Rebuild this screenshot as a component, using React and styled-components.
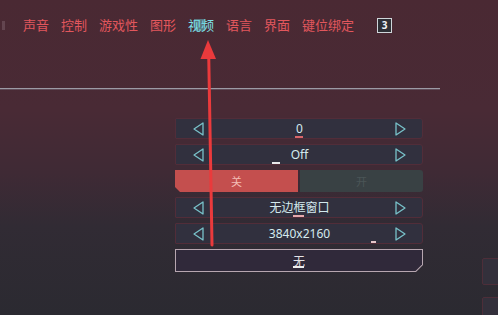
import React from "react";
import styled, { createGlobalStyle } from "styled-components";

const GlobalStyle = createGlobalStyle`
  html, body {
    margin: 0;
    padding: 0;
    background: #2b2a31;
  }
  * {
    box-sizing: border-box;
  }
`;

const Screen = styled.div`
  position: relative;
  width: 498px;
  height: 315px;
  overflow: hidden;
  font-family: "Noto Sans", "Noto Sans CJK SC", sans-serif;
  background: linear-gradient(
    to bottom,
    #4a2933 0%,
    #492a35 35%,
    #3f2a35 55%,
    #312b34 72%,
    #2b2a31 100%
  );
`;

const TabBar = styled.nav`
  display: flex;
  align-items: center;
  gap: 12px;
  height: 16px;
  margin-top: 17px;
  padding-left: 2px;
`;

const EdgeMark = styled.span`
  width: 3px;
  height: 9px;
  margin-right: 6px;
  background: rgba(190, 170, 180, 0.22);
`;

const Tab = styled.span`
  position: relative;
  font-size: 13px;
  line-height: 16px;
  color: ${props => (props.active ? "#7fe2ea" : "#e2575d")};

  &::before {
    content: "";
    display: ${props => (props.active ? "block" : "none")};
    position: absolute;
    left: 6px;
    top: 2px;
    width: 11px;
    height: 12px;
    background: rgba(110, 215, 225, 0.45);
  }
`;

const KeyHint = styled.span`
  display: flex;
  align-items: center;
  justify-content: center;
  width: 15px;
  height: 15px;
  margin-left: 11px;
  border: 1.5px solid #cfd6da;
  background: #2d2f35;
  color: #eef2f4;
  font-size: 10px;
  font-weight: 700;
`;

const Divider = styled.div`
  width: 440px;
  height: 1px;
  margin-top: 55px;
  background: #9c9aa5;
  box-shadow: 0 1px 0 rgba(120, 110, 125, 0.5);
`;

const Main = styled.div`
  display: flex;
  margin-top: 29px;
`;

const Panel = styled.div`
  display: flex;
  flex-direction: column;
  flex-shrink: 0;
  gap: 5px;
  width: 248px;
  margin-left: 175px;
`;

const Row = styled.div`
  position: relative;
  display: flex;
  align-items: center;
  height: 21px;
  padding: 0 16px 0 17px;
  background: #31303e;
  border: 1px solid #512d39;
  border-radius: 1px 3px 3px 1px;
`;

const Value = styled.span`
  flex: 1;
  text-align: center;
  font-size: 12px;
  line-height: 14px;
  color: #d4eaee;
`;

const Mark = styled.span`
  position: absolute;
  left: ${props => props.left}px;
  top: ${props => props.top}px;
  width: ${props => props.w}px;
  height: 1.5px;
  background: ${props => props.color};
`;

const ArrowIcon = ({ dir }) => (
  <svg width="11" height="14" viewBox="0 0 11 14">
    <path
      d={dir === "left" ? "M10 1 L1 7 L10 13 Z" : "M1 1 L10 7 L1 13 Z"}
      fill="none"
      stroke="#78c2ca"
      strokeWidth="1.3"
      strokeLinejoin="round"
    />
  </svg>
);

const Toggle = styled.div`
  display: flex;
  gap: 2px;
  height: 22px;
`;

const ToggleHalf = styled.div`
  flex: 1;
  display: flex;
  align-items: center;
  justify-content: center;
  font-size: 11px;
  background: ${props => (props.on ? "#c44f4e" : "#394144")};
  color: ${props => (props.on ? "#f3bdb5" : "#4b5557")};
  clip-path: ${props =>
    props.on
      ? "polygon(0 0, 100% 0, 100% 100%, 5px 100%, 0 calc(100% - 5px))"
      : "none"};
  border-radius: ${props => (props.on ? "0" : "0 3px 3px 0")};
`;

const ButtonFrame = styled.div`
  height: 23px;
  padding: 1px;
  background: #b7a6b0;
  clip-path: polygon(0 0, 100% 0, 100% calc(100% - 7px), calc(100% - 7px) 100%, 0 100%);
`;

const ButtonInner = styled.div`
  position: relative;
  display: flex;
  align-items: center;
  justify-content: center;
  height: 100%;
  background: #30293a;
  clip-path: polygon(0 0, 100% 0, 100% calc(100% - 6.5px), calc(100% - 6.5px) 100%, 0 100%);
  font-size: 12px;
  color: #e4e2e6;
`;

const SideColumn = styled.div`
  display: flex;
  flex-direction: column;
  flex-shrink: 0;
  gap: 12px;
  margin-left: 59px;
  padding-top: 140px;
`;

const SideBox = styled.div`
  width: 30px;
  height: ${props => props.h}px;
  background: #33303b;
  border: 1px solid #4d2e39;
  border-radius: 2px 0 0 2px;
`;

const Pointer = styled.svg`
  position: absolute;
  left: 0;
  top: 0;
  pointer-events: none;
`;

const rows = [
  { value: "0", mark: { left: 119, top: 17, w: 8, color: "#d9666a" } },
  { value: "Off", mark: { left: 96, top: 17, w: 8, color: "#e8e8ea" } }
];

const rowsAfter = [
  { value: "无边框窗口", mark: { left: 117, top: 17, w: 11, color: "#e6a9ac" } },
  { value: "3840x2160", mark: { left: 195, top: 17, w: 5, color: "#e6c7ca" } }
];

const SelectRow = ({ value, mark }) => (
  <Row>
    <ArrowIcon dir="left" />
    <Value>{value}</Value>
    <ArrowIcon dir="right" />
    {mark && <Mark {...mark} />}
  </Row>
);

const tabs = ["声音", "控制", "游戏性", "图形", "视频", "语言", "界面", "键位绑定"];

export default function App() {
  return (
    <>
      <GlobalStyle />
      <Screen>
        <TabBar>
          <EdgeMark />
          {tabs.map(t => (
            <Tab key={t} active={t === "视频"}>
              {t}
            </Tab>
          ))}
          <KeyHint>3</KeyHint>
        </TabBar>
        <Divider />
        <Main>
          <Panel>
            {rows.map(r => (
              <SelectRow key={r.value} {...r} />
            ))}
            <Toggle>
              <ToggleHalf on>关</ToggleHalf>
              <ToggleHalf>开</ToggleHalf>
            </Toggle>
            {rowsAfter.map(r => (
              <SelectRow key={r.value} {...r} />
            ))}
            <ButtonFrame>
              <ButtonInner>
                无
                <Mark left={117} top={16} w={11} color="#eeeeee" />
              </ButtonInner>
            </ButtonFrame>
          </Panel>
          <SideColumn>
            <SideBox h={27} />
            <SideBox h={27} />
          </SideColumn>
        </Main>
        <Pointer width="498" height="315" viewBox="0 0 498 315">
          <line
            x1="212"
            y1="245"
            x2="208.7"
            y2="54"
            stroke="#ea3a3c"
            strokeWidth="3"
            strokeLinecap="round"
          />
          <polygon points="208,40 200.5,59 216,59" fill="#ea3a3c" />
        </Pointer>
      </Screen>
    </>
  );
}
